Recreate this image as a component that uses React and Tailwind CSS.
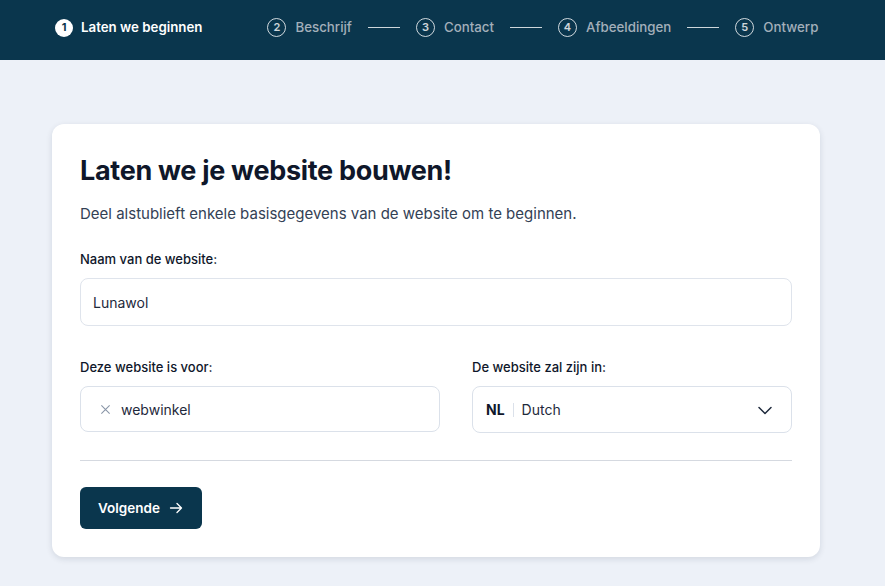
import { useState } from 'react';

const steps = ['Laten we beginnen', 'Beschrijf', 'Contact', 'Afbeeldingen', 'Ontwerp'];

const StepBar = () => (
  <div className="h-[60px] bg-[#0a364d] flex items-center pl-[55px] pb-[5px]">
    {steps.map((s, i) => (
      <div key={s} className="flex items-center">
        {i > 1 && <div className="w-8 h-px bg-white/80 mx-4" />}
        {i === 1 && <div className="w-[65px]" />}
        <div
          className={
            i === 0
              ? 'w-[18px] h-[18px] rounded-full bg-white text-[#0a364d] text-[11px] font-bold flex items-center justify-center'
              : 'w-[19px] h-[19px] rounded-full border border-white/80 text-white/80 text-[11px] font-semibold flex items-center justify-center'
          }
        >
          {i + 1}
        </div>
        <span className={i === 0 ? 'ml-2 text-[13.3px] font-semibold text-white' : 'ml-[9px] text-[13.3px] font-medium text-[#a3afba]'}>
          {s}
        </span>
      </div>
    ))}
  </div>
);

const App = () => {
  const [name, setName] = useState('Lunawol');

  return (
    <div className="min-h-screen bg-[#edf1f8]" style={{ fontFamily: 'Inter, "Noto Sans", sans-serif' }}>
      <StepBar />
      <div className="px-[52px] pt-[64px] pb-[29px]">
        <div className="w-[768px] bg-white rounded-xl shadow-[0_2px_6px_rgba(15,30,60,0.12)] px-7 pt-[31px] pb-7">
          <h1 className="text-[27px] font-bold text-[#0f172a] tracking-[-0.3px] leading-[32px]">Laten we je website bouwen!</h1>
          <p className="mt-[17px] text-[15px] text-[#334155] leading-5">
            Deel alstublieft enkele basisgegevens van de website om te beginnen.
          </p>

          {/* name */}
          <label className="block mt-[25px] text-[13px] font-medium text-[#0f172a] leading-5">Naam van de website:</label>
          <input
            value={name}
            onChange={(e) => setName(e.target.value)}
            className="mt-[9px] w-full h-12 rounded-lg border border-[#dfe4ec] px-3 text-[14px] text-[#1e293b] outline-none"
          />

          {/* two columns */}
          <div className="grid grid-cols-[360px_1fr] gap-8 mt-[31px]">
            <div>
              <label className="block text-[13px] font-medium text-[#0f172a] leading-5">Deze website is voor:</label>
              <div className="mt-[9px] h-[46px] rounded-lg border border-[#dbe1ea] flex items-center pl-[19px]">
                <svg width="11" height="11" viewBox="0 0 12 12" className="text-[#8a96a8]">
                  <path d="M1.5 1.5l9 9M10.5 1.5l-9 9" stroke="currentColor" strokeWidth="1.2" fill="none" />
                </svg>
                <span className="ml-[10px] text-[14px] text-[#1e293b]">webwinkel</span>
              </div>
            </div>
            <div>
              <label className="block text-[13px] font-medium text-[#0f172a] leading-5">De website zal zijn in:</label>
              <div className="mt-[9px] h-[47px] rounded-lg border border-[#dbe1ea] flex items-center pl-[13px] pr-[18px]">
                <span className="text-[14px] font-bold text-[#0f172a]">NL</span>
                <span className="mx-2 w-px h-[14px] bg-[#dbe1ea]" />
                <span className="text-[14px] text-[#1e293b]">Dutch</span>
                <svg width="16" height="16" viewBox="0 0 16 16" className="ml-auto text-[#1e293b]">
                  <path d="M2 5.5l6 6 6-6" stroke="currentColor" strokeWidth="1.5" fill="none" strokeLinecap="round" strokeLinejoin="round" />
                </svg>
              </div>
            </div>
          </div>

          <div className="mt-[27px] h-px bg-[#d5d9e0]" />

          <button className="mt-[26px] h-[42px] w-[122px] rounded-md bg-[#0a364d] text-white text-[13.5px] font-semibold flex items-center justify-center gap-2">
            Volgende
            <svg width="16" height="16" viewBox="0 0 16 16">
              <path d="M2.5 8h11M9 3.5L13.5 8 9 12.5" stroke="currentColor" strokeWidth="1.3" fill="none" strokeLinecap="round" strokeLinejoin="round" />
            </svg>
          </button>
        </div>
      </div>
    </div>
  );
};

export default App;
